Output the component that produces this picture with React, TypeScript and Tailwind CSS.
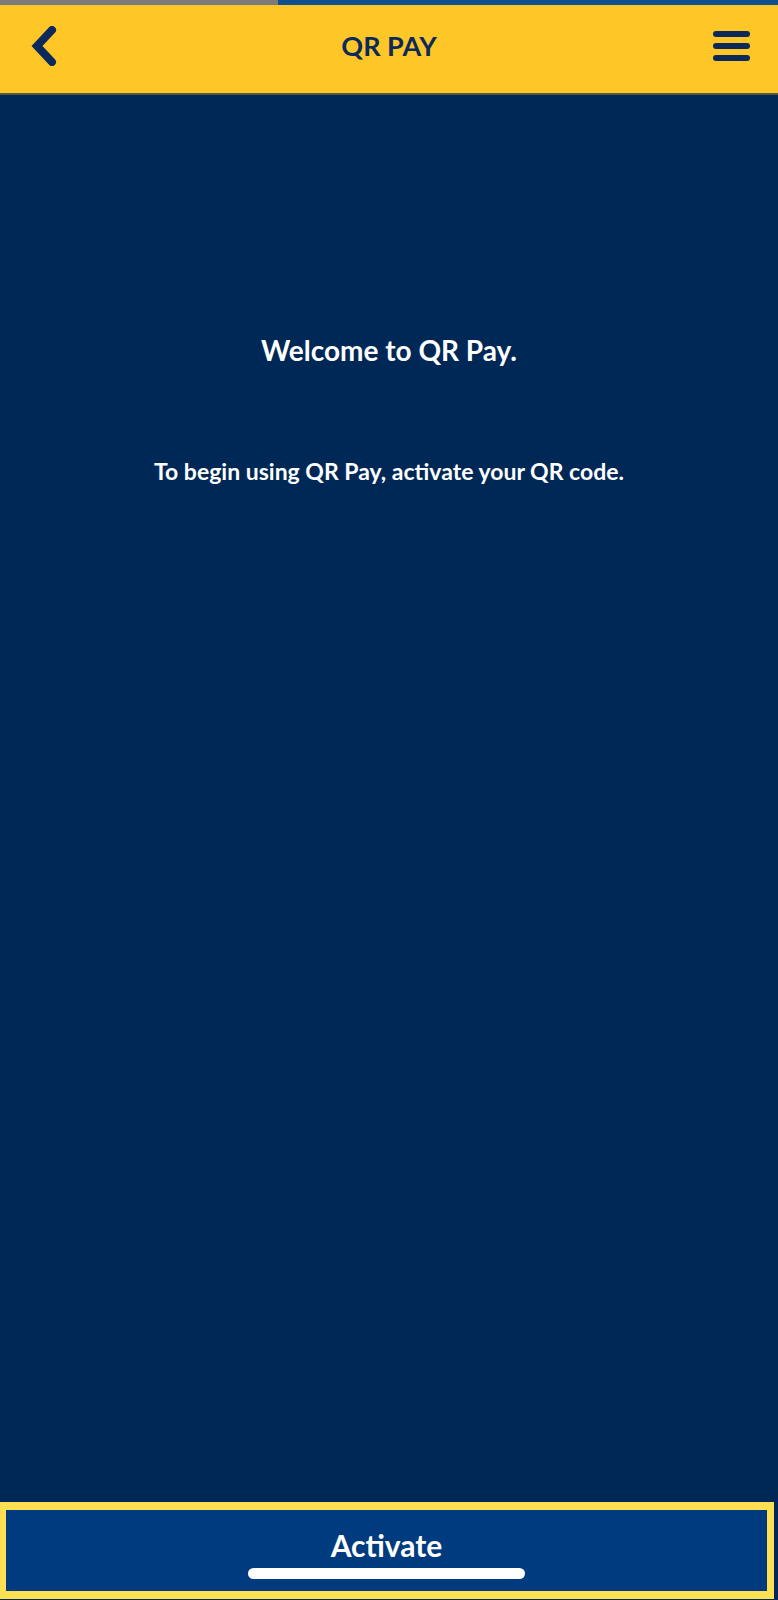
export default function App() {
  return (
    <div className="w-full h-[1600px] flex flex-col bg-[#002856] font-['Lato','Liberation_Sans',sans-serif]">
      {/* Status progress strip */}
      <div className="h-[5px] flex">
        <div className="w-[278px] bg-[#7b7b7b]" />
        <div className="flex-1 bg-[#0f4f8f]" />
      </div>

      {/* Header */}
      <div className="h-[90px] flex items-center pb-[6px] bg-[#fec627] border-b-2 border-[#55583f]">
        <div className="w-[120px] flex items-center pl-[30px]">
          <svg width="30" height="40" viewBox="0 0 30 40" fill="none">
            <path
              d="M22 4 L7 20 L22 36"
              stroke="#0b2a5b"
              strokeWidth="8"
              strokeLinecap="round"
              strokeLinejoin="miter"
            />
          </svg>
        </div>
        <h1 className="flex-1 text-center text-[27px] leading-[34px] font-bold text-[#0b2a5b]">QR PAY</h1>
        <div className="w-[120px] flex justify-end pr-[28px]">
          <div className="flex flex-col gap-[6.5px]">
            <span className="block w-[37px] h-[5.5px] rounded-full bg-[#0b2a5b]" />
            <span className="block w-[37px] h-[5.5px] rounded-full bg-[#0b2a5b]" />
            <span className="block w-[37px] h-[5.5px] rounded-full bg-[#0b2a5b]" />
          </div>
        </div>
      </div>

      {/* Body */}
      <div className="flex-1 flex flex-col items-center pt-[238px] text-white">
        <p className="text-[28px] leading-[34px] font-bold">Welcome to QR Pay.</p>
        <p className="mt-[90px] text-[23px] leading-[28px] font-bold">
          To begin using QR Pay, activate your QR code.
        </p>
      </div>

      {/* Activate button */}
      <button className="w-[774px] flex flex-col items-center bg-[#003b80] border-t-8 border-b-8 border-l-[6px] border-r-[7px] border-[#ffe052] pt-[17px] pb-[12px] mb-[1px]">
        <span className="text-[30px] leading-[36px] font-bold text-white">Activate</span>
        <span className="mt-[5px] block w-[277px] h-[11px] rounded-full bg-white" />
      </button>
    </div>
  );
}
